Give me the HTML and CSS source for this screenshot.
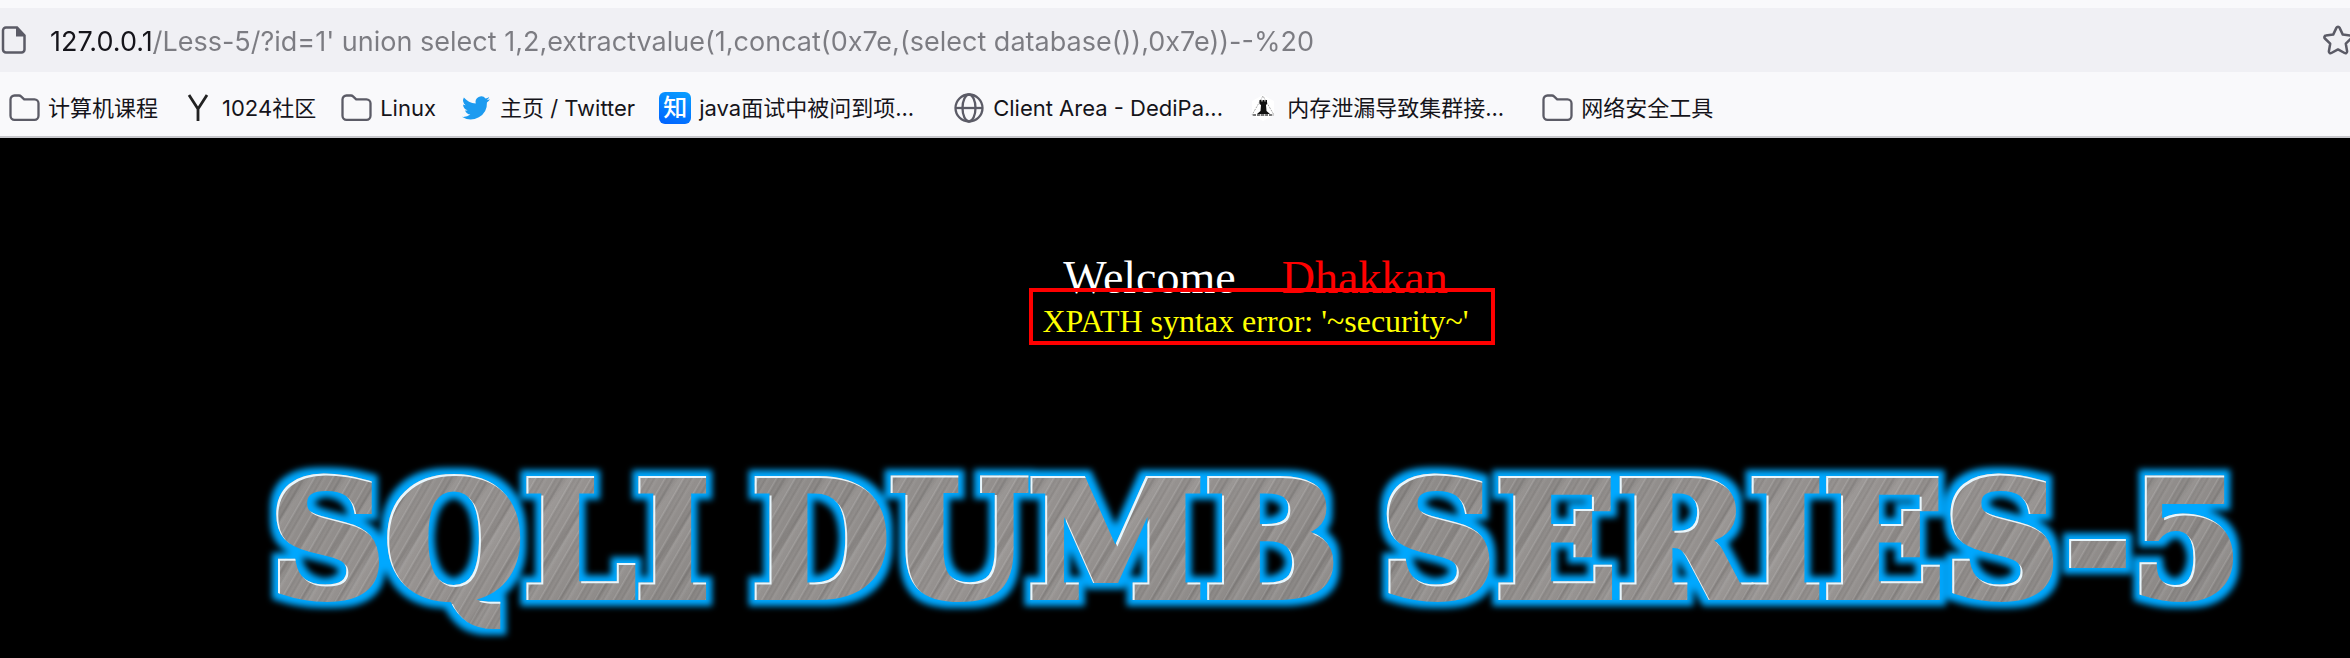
FILE: index.html
```html
<!DOCTYPE html>
<html lang="zh-CN">
<head>
<meta charset="utf-8">
<title>Less-5</title>
<link rel="stylesheet" href="styles.css">
</head>
<body>
<svg class="defs" aria-hidden="true">
  <defs>
    <symbol id="folder" viewBox="0 0 32 32"><path d="M2.500 7.500a4 4 0 0 1 4-4h4.500a3 3 0 0 1 2 .8l3.200 3h10.300a4 4 0 0 1 4 4v12.500a4 4 0 0 1-4 4h-20a4 4 0 0 1-4-4z" fill="none" stroke="#5b5b66" stroke-width="2.300" stroke-linejoin="round"/></symbol>
    <filter id="metal" x="-5%" y="-20%" width="110%" height="140%" color-interpolation-filters="sRGB">
      <feMorphology in="SourceAlpha" operator="dilate" radius="6" result="fat"/>
      <feGaussianBlur in="fat" stdDeviation="3" result="soft"/>
      <feFlood flood-color="#00a8ff"/>
      <feComposite in2="soft" operator="in" result="glow"/>
      <feOffset in="SourceAlpha" dx="2" dy="2" result="inner"/>
      <feFlood flood-color="#e8f6fc"/>
      <feComposite in2="SourceAlpha" operator="in"/>
      <feComposite in2="inner" operator="out" result="light"/>
      <feMerge>
        <feMergeNode in="glow"/>
        <feMergeNode in="SourceGraphic"/>
        <feMergeNode in="light"/>
      </feMerge>
    </filter>
  </defs>
</svg>
<header class="chrome">
  <div class="urlbar">
    <svg class="page-icon" viewBox="0 0 28 32" aria-hidden="true"><path d="M6 3.500h11l7.500 8v14a3 3 0 0 1-3 3H6a3 3 0 0 1-3-3v-19a3 3 0 0 1 3-3z" fill="none" stroke="#5b5b66" stroke-width="2.500"/><path d="M16 3v9.500h9z" fill="#5b5b66"/></svg>
    <input class="url" type="text" aria-label="URL" spellcheck="false" value="127.0.0.1/Less-5/?id=1' union select 1,2,extractvalue(1,concat(0x7e,(select database()),0x7e))--%20">
    <button class="star" type="button" aria-label="Bookmark"><svg viewBox="0 0 32 32" aria-hidden="true"><path d="M14.500 3.600a1.700 1.700 0 0 1 3 0l3.300 7 7.300 1a1.700 1.700 0 0 1 1 2.900l-5.300 5.200 1.300 7.600a1.700 1.700 0 0 1-2.500 1.700L16 25.400 9.400 29a1.700 1.700 0 0 1-2.500-1.700l1.300-7.600-5.300-5.200a1.700 1.700 0 0 1 1-2.900l7.300-1z" fill="none" stroke="#5b5b66" stroke-width="2.500" stroke-linejoin="round"/></svg></button>
  </div>
  <nav class="bookmarks">
    <a class="mark" href="#"><svg class="icon"><use href="#folder"/></svg><span class="label">计算机课程</span></a>
    <a class="mark" href="#"><svg class="icon" viewBox="0 0 32 32"><path d="M7 3l9 14L25 3M16 16v13" fill="none" stroke="#222" stroke-width="2.800"/></svg><span class="label">1024社区</span></a>
    <a class="mark" href="#"><svg class="icon"><use href="#folder"/></svg><span class="label">Linux</span></a>
    <a class="mark" href="#"><svg class="icon" viewBox="0 0 24 24"><path fill="#1d9bf0" d="M22.500 5.400c-.8.300-1.600.6-2.500.7.900-.5 1.600-1.400 1.900-2.400-.8.500-1.800.9-2.700 1.100a4.300 4.300 0 0 0-7.400 3.900C8.200 8.500 5 6.800 2.900 4.200a4.300 4.300 0 0 0 1.300 5.700c-.7 0-1.400-.2-1.900-.5 0 2.100 1.400 3.900 3.400 4.300-.6.200-1.300.2-1.900.1.500 1.700 2.100 2.900 4 3a8.600 8.600 0 0 1-6.400 1.800 12.200 12.200 0 0 0 18.800-10.800c.9-.7 1.700-1.500 2.300-2.400z"/></svg><span class="label">主页 / Twitter</span></a>
    <a class="mark" href="#"><span class="icon zhihu">知</span><span class="label cut">java面试中被问到项...</span></a>
    <a class="mark" href="#"><svg class="icon" viewBox="0 0 32 32"><g fill="none" stroke="#5b5b66" stroke-width="2.300"><circle cx="16" cy="16" r="13.500"/><ellipse cx="16" cy="16" rx="6.500" ry="13.500"/><path d="M2.500 16h27"/></g></svg><span class="label cut">Client Area - DediPa...</span></a>
    <a class="mark" href="#"><svg class="icon" viewBox="0 0 32 32"><path d="M16 3l11 6v14l-11 6-11-6V9z" fill="#fff"/><path d="M16 4L5 23h22z" fill="none" stroke="#aaa" stroke-dasharray="2 1"/><path d="M12.500 8h2v1.500h1V8h2v1.500h1V8h1.500v4l-1 1 .5 6 3.500 3H10l3.500-3 .5-6-1.500-1z" fill="#111"/><path d="M6 23h20" stroke="#555" stroke-width="1.500" stroke-dasharray="3 1"/></svg><span class="label cut">内存泄漏导致集群接...</span></a>
    <a class="mark" href="#"><svg class="icon"><use href="#folder"/></svg><span class="label">网络安全工具</span></a>
  </nav>
</header>
<main class="page">
  <p class="welcome">Welcome&nbsp;&nbsp;&nbsp; <span class="name">Dhakkan</span></p>
  <p class="error">XPATH syntax error: '~security~'</p>
  <h1 class="title"><span class="word">SQLI</span> <span class="word">DUMB</span> <span class="word">SERIES-5</span></h1>
</main>
</body>
</html>
```
FILE: styles.css
```css
* { box-sizing: border-box; }
body {
  margin: 0;
  min-height: 100vh;
  background: #000;
  font-family: Inter, "Noto Sans CJK SC", sans-serif;
}
.defs { position: absolute; width: 0; height: 0; }
.chrome {
  padding-top: 8px;
  background: #f9f9fb;
  border-bottom: 2px solid #c8c8cc;
}
.urlbar {
  display: flex;
  align-items: center;
  height: 64px;
  background: #f0f0f4;
  overflow: hidden;
}
.page-icon { flex: none; width: 28px; height: 32px; }
.url {
  flex: 1;
  min-width: 0;
  height: 64px;
  margin: 0 0 0 22px;
  padding: 2px 0 0;
  border: 0;
  outline: 0;
  font: 27px Inter, sans-serif;
  color: transparent;
  background: linear-gradient(90deg, #15141a 104px, #7c7c82 104px);
  -webkit-background-clip: text;
  background-clip: text;
}
.star {
  flex: none;
  width: 32px;
  height: 32px;
  margin-right: -4px;
  padding: 0;
  border: 0;
  background: none;
}
.star svg { display: block; width: 32px; height: 32px; }
.bookmarks {
  display: flex;
  align-items: center;
  gap: 24px;
  height: 64px;
  padding: 8px 0 0 8px;
}
.mark {
  display: flex;
  align-items: center;
  gap: 8px;
  color: #15141a;
  font-size: 22px;
  line-height: 32px;
  white-space: nowrap;
  text-decoration: none;
}
.icon { flex: none; width: 32px; height: 32px; }
.cut { width: 230px; }
.zhihu {
  border-radius: 6px;
  background: linear-gradient(200deg, #0aa0ff, #0061ff);
  color: #fff;
  font-size: 24px;
  font-weight: 500;
  line-height: 32px;
  text-align: center;
}
.page {
  display: flex;
  flex-direction: column;
  align-items: center;
  padding: 112px 0 0 161px;
  font-family: "Liberation Serif", serif;
}
.welcome { margin: 0; color: #fff; font-size: 46px; line-height: 56px; }
.name { color: #f00; }
.error {
  position: relative;
  margin: 0;
  color: #ff0;
  font-size: 32px;
  line-height: 30px;
}
.error::after {
  content: "";
  position: absolute;
  inset: -18px -26px -9px -13px;
  border: 4px solid #f00;
}
.title {
  display: flex;
  gap: 42px;
  margin: 114px 0 0;
  font: bold 159px/180px "DejaVu Serif", serif;
  filter: url(#metal);
}
.word {
  color: transparent;
  -webkit-text-stroke: 8px transparent;
  background:
    repeating-linear-gradient(120deg, #fff0 0 3px, #fff2 4px, #0001 6px, #fff0 9px, #0001 11px, #fff1 13px, #fff0 16px),
    repeating-linear-gradient(123deg, #0000 0 11px, #0001 14px, #fff1 18px, #0000 31px),
    linear-gradient(150deg, #8c8987, #969290 50%, #8a8785);
  -webkit-background-clip: text;
  background-clip: text;
}
```
